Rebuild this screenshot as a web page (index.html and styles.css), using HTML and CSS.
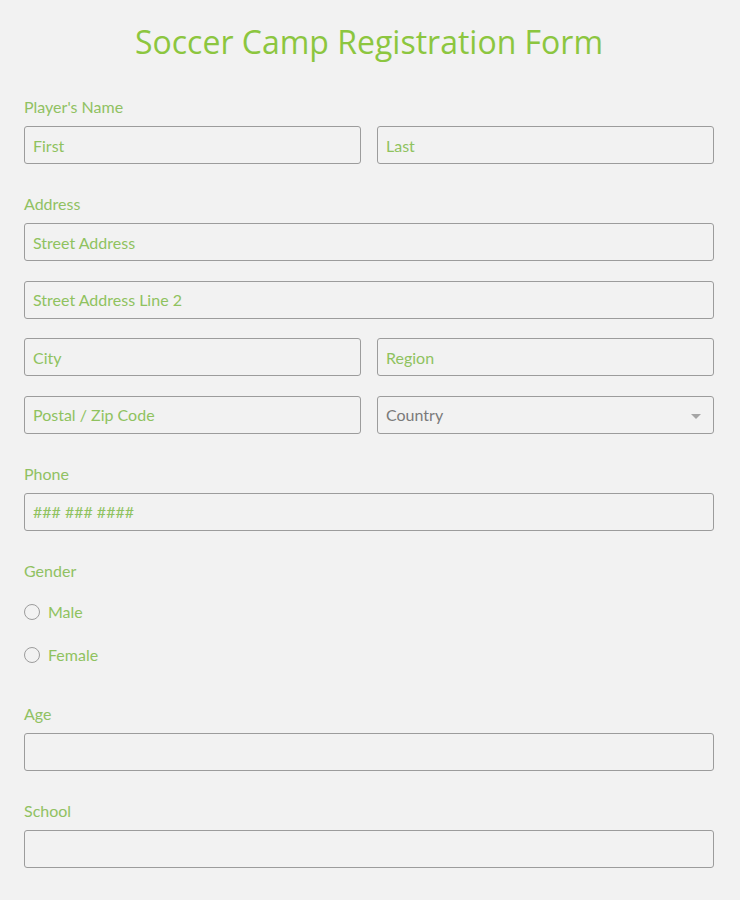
FILE: index.html
```html
<!DOCTYPE html>
<html>
<head>
<meta charset="utf-8">
<link rel="stylesheet" href="styles.css">
</head>
<body>
<form class="form">
  <h1 class="title">Soccer Camp Registration Form</h1>

  <div class="group">
    <label class="label">Player's Name</label>
    <div class="row two">
      <input class="input" placeholder="First">
      <input class="input" placeholder="Last">
    </div>
  </div>

  <div class="group">
    <label class="label">Address</label>
    <div class="stack">
      <input class="input" placeholder="Street Address">
      <input class="input" placeholder="Street Address Line 2">
      <div class="row two">
        <input class="input" placeholder="City">
        <input class="input" placeholder="Region">
      </div>
      <div class="row two">
        <input class="input" placeholder="Postal / Zip Code">
        <div class="select-wrap">
          <select class="input select"><option>Country</option></select>
        </div>
      </div>
    </div>
  </div>

  <div class="group">
    <label class="label">Phone</label>
    <input class="input" placeholder="### ### ####">
  </div>

  <div class="group gender">
    <label class="label">Gender</label>
    <div class="radios">
      <label class="radio"><input type="radio" name="g" class="radio-input"><span>Male</span></label>
      <label class="radio"><input type="radio" name="g" class="radio-input"><span>Female</span></label>
    </div>
  </div>

  <div class="group">
    <label class="label">Age</label>
    <input class="input">
  </div>

  <div class="group">
    <label class="label">School</label>
    <input class="input">
  </div>
</form>
</body>
</html>
```

FILE: styles.css
```css
html, body {
  margin: 0;
  padding: 0;
  background: #f2f2f2;
}
body {
  font-family: Lato, "Open Sans", sans-serif;
}
.form {
  padding: 0 26px 0 24px;
  display: flex;
  flex-direction: column;
}
.title {
  font-family: "Open Sans", sans-serif;
  font-weight: 400;
  font-size: 32px;
  line-height: 44px;
  color: #8cc63f;
  text-align: center;
  margin: 20px 0 33px;
}
.group {
  display: flex;
  flex-direction: column;
  margin-bottom: 30px;
}
.label {
  display: block;
  font-size: 16px;
  line-height: 20px;
  color: #90c162;
  margin-bottom: 9px;
}
.stack {
  display: flex;
  flex-direction: column;
  gap: 19.5px;
}
.row.two {
  display: grid;
  grid-template-columns: 1fr 1fr;
  gap: 16px;
}
.input {
  box-sizing: border-box;
  width: 100%;
  height: 38px;
  border: 1px solid #9c9c9c;
  border-radius: 3px;
  background: #f2f2f2;
  padding: 0 8px;
  font-family: Lato, sans-serif;
  font-size: 16px;
  color: #8fc25f;
  outline: none;
  margin: 0;
}
.input::placeholder {
  color: #8fc25f;
  opacity: 1;
}
.select-wrap {
  position: relative;
}
.select {
  appearance: none;
  -webkit-appearance: none;
  color: #7a7a7a;
}
.select-wrap::after {
  content: "";
  position: absolute;
  right: 13px;
  top: 18px;
  border-left: 5px solid transparent;
  border-right: 5px solid transparent;
  border-top: 5px solid #a5a5a5;
  pointer-events: none;
}
.radios {
  display: flex;
  flex-direction: column;
  padding-top: 11px;
  gap: 21px;
}
.radio {
  display: flex;
  align-items: center;
  gap: 8px;
  font-size: 16px;
  line-height: 22px;
  color: #8fc25f;
}
.radio-input {
  appearance: none;
  -webkit-appearance: none;
  box-sizing: border-box;
  width: 16px;
  height: 16px;
  border: 1px solid #9c9c9c;
  border-radius: 50%;
  margin: 0;
  background: #f2f2f2;
}
.gender {
  margin-bottom: 38px;
}
```
